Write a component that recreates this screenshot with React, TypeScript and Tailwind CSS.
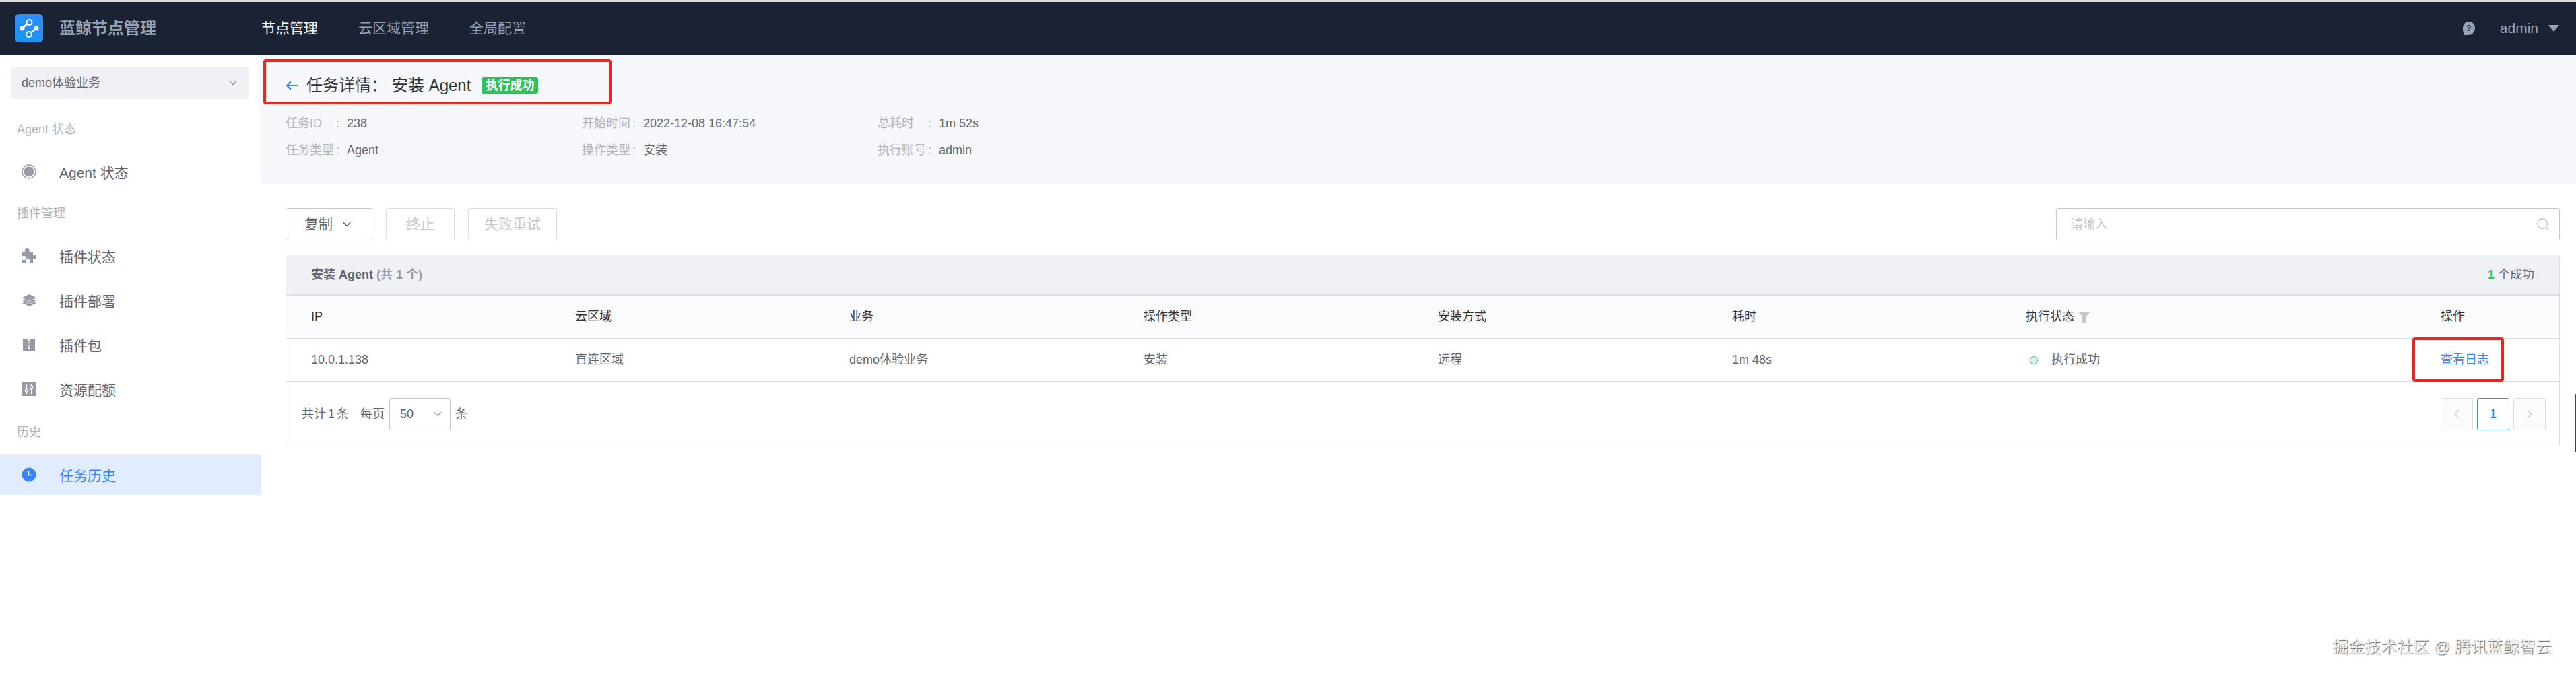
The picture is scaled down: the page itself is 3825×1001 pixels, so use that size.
import { ChevronDown, ChevronLeft, ChevronRight, Search } from 'lucide-react';

const font = { fontFamily: '"Liberation Sans", "Noto Sans CJK SC", sans-serif' };

const Logo = () => (
  <svg viewBox="0 0 42 42" className="w-[42px] h-[42px]">
    <defs>
      <linearGradient id="lg" x1="0" y1="0" x2="0" y2="1">
        <stop offset="0" stopColor="#2f8dfb" />
        <stop offset="1" stopColor="#1a94ee" />
      </linearGradient>
    </defs>
    <rect width="42" height="42" rx="6" fill="url(#lg)" />
    <path d="M11 21L21 12M32 21L21 30" stroke="#fff" strokeWidth="2.4" />
    <path d="M11 21h0M32 21h0" stroke="#fff" strokeWidth="7" strokeLinecap="round" />
    <circle cx="21.500" cy="12" r="4" fill="#2f8dfb" stroke="#fff" strokeWidth="2" />
    <circle cx="21" cy="30" r="4" fill="#1a94ee" stroke="#fff" strokeWidth="2" />
  </svg>
);

const AgentIcon = () => (
  <svg viewBox="0 0 22 22" className="w-[22px] h-[22px]">
    <circle cx="11" cy="11" r="10" fill="none" stroke="#979ba5" strokeWidth="1.4" />
    <circle cx="11" cy="11" r="7.600" fill="#979ba5" />
  </svg>
);

const PuzzleIcon = () => (
  <svg viewBox="0 0 22 22" className="w-[22px] h-[22px]">
    <path
      d="M1 6H6C5 5 4.700 4 4.700 3.200A3.500 3.200 0 0 1 11.700 3.200C11.700 4 11.400 5 10.400 6H17V10.500C18 9.500 18.500 9.300 19 9.300A2.800 3.300 0 0 1 19 15.900C18.500 15.900 18 15.700 17 14.700V21H11.800C12.800 20 13 19.500 13 18.800A3.500 3 0 0 0 6 18.800C6 19.500 6.200 20 7.200 21H1V16C2 17 2.500 17.200 3.200 17.200A3 3.200 0 0 0 3.200 10.800C2.500 10.800 2 11 1 12Z"
      fill="#979ba5"
    />
  </svg>
);

const LayersIcon = () => (
  <svg viewBox="0 0 21 18" className="w-[21px] h-[18px]">
    <path d="M10.500 0L21 5 10.500 10 0 5z" fill="#979ba5" />
    <path d="M3.500 7.300L0 9 10.500 14 21 9 17.500 7.300 10.500 10.800z" fill="#979ba5" />
    <path d="M3.500 11.300L0 13 10.500 18 21 13 17.500 11.300 10.500 14.800z" fill="#979ba5" />
  </svg>
);

const ZipIcon = () => (
  <svg viewBox="0 0 18 18" className="w-[18px] h-[18px]">
    <path d="M0 0h18v18H0z" fill="#979ba5" />
    <path d="M8 1h2v2H8zM8 5h2v2H8zM8 9h2v2H8zM7 12h4v4H7z" fill="#fff" />
  </svg>
);

const SlidersIcon = () => (
  <svg viewBox="0 0 20 20" className="w-[20px] h-[20px]">
    <path d="M0 0h20v20H0z" fill="#979ba5" />
    <path d="M6.500 3v14M13.500 3v14" stroke="#fff" strokeWidth="1.300" />
    <circle cx="6.500" cy="12" r="2" fill="#979ba5" stroke="#fff" strokeWidth="1.300" />
    <circle cx="13.500" cy="7" r="2" fill="#979ba5" stroke="#fff" strokeWidth="1.300" />
  </svg>
);

const ClockIcon = () => (
  <svg viewBox="0 0 22 22" className="w-[22px] h-[22px]">
    <circle cx="11" cy="11" r="10.500" fill="#3a84ff" />
    <path d="M10.500 5V11.500H16" fill="none" stroke="#fff" strokeWidth="1.500" />
  </svg>
);

const HelpIcon = () => (
  <svg viewBox="0 0 18 20" className="w-[18px] h-[20px]">
    <path d="M9 0c5 0 9 4 9 9.500S14 20 8 20H1.500L1 17.500C0 15 0 12 0 9.500 0 4 4 0 9 0z" fill="#96a2b9" />
    <text x="9" y="14" textAnchor="middle" fontSize="12" fontWeight="700" fill="#1a2233" style={font}>?</text>
  </svg>
);

const SectionLabel = ({ children, className }: { children: React.ReactNode; className: string }) => (
  <div className={`pl-[25px] text-[18px] leading-[24px] text-[#b1b4bb] ${className}`}>{children}</div>
);

const NavItem = ({ icon, label, active }: { icon: React.ReactNode; label: string; active?: boolean }) => (
  <div className={`flex h-[60px] items-center text-[21px] ${active ? 'bg-[#e1ecff] text-[#3a84ff]' : 'text-[#63656e]'}`}>
    <span className="flex w-[88px] justify-center pr-[2px]">{icon}</span>
    <span className="pt-[3px]">{label}</span>
  </div>
);

const InfoItem = ({ label, value }: { label: string; value: string }) => (
  <div className="flex text-[18px] leading-[24px]">
    <span className="w-[75px] text-[#b1b4bb]">{label}</span>
    <span className="w-[16px] text-[#b1b4bb]">:</span>
    <span className="text-[#63656e]">{value}</span>
  </div>
);

const gridCols = 'grid grid-cols-[392px_407px_437px_437px_437px_436px_616px_213px] items-center pl-[37px]';

const Sidebar = () => (
  <aside className="w-[388px] shrink-0 border-r border-[#e6e7ea] bg-white">
    <div className="mx-[16px] mt-[18px] flex h-[48px] w-[353px] items-center justify-between rounded-[3px] bg-[#f0f1f5] pl-[16px] pr-[12px] text-[18px] text-[#63656e]">
      demo体验业务
      <ChevronDown className="h-[22px] w-[22px] text-[#979ba5]" strokeWidth={1.6} />
    </div>
    <SectionLabel className="mt-[33px]">Agent 状态</SectionLabel>
    <div className="mt-[21px]">
      <NavItem icon={<AgentIcon />} label="Agent 状态" />
    </div>
    <SectionLabel className="mt-[20px]">插件管理</SectionLabel>
    <div className="mt-[21px] flex flex-col gap-[6px]">
      <NavItem icon={<PuzzleIcon />} label="插件状态" />
      <NavItem icon={<LayersIcon />} label="插件部署" />
      <NavItem icon={<ZipIcon />} label="插件包" />
      <NavItem icon={<SlidersIcon />} label="资源配额" />
    </div>
    <SectionLabel className="mt-[22px]">历史</SectionLabel>
    <div className="mt-[21px]">
      <NavItem icon={<ClockIcon />} label="任务历史" active />
    </div>
  </aside>
);

const App = () => (
  <div className="relative flex h-[1001px] w-[3825px] flex-col overflow-hidden bg-white" style={font}>
    <div className="h-[3px] bg-[#d8dcdd]" />
    <header className="flex h-[78px] items-center justify-between bg-[#1a2233] pl-[22px] pr-[25px]">
      <div className="flex items-center">
        <Logo />
        <span className="ml-[24px] w-[300px] text-[24px] font-bold text-[#96a2b9]">蓝鲸节点管理</span>
        <nav className="flex gap-[60px] text-[21px] text-[#96a2b9]">
          <span className="text-white">节点管理</span>
          <span>云区域管理</span>
          <span>全局配置</span>
        </nav>
      </div>
      <div className="flex items-center text-[21px] text-[#96a2b9]">
        <HelpIcon />
        <span className="ml-[37px]">admin</span>
        <span className="ml-[15px] h-0 w-0 border-x-[8px] border-t-[10px] border-x-transparent border-t-[#96a2b9]" />
      </div>
    </header>

    <div className="flex flex-1">
      <Sidebar />
      <main className="min-w-0 flex-1">
        <section className="h-[192px] bg-[#f5f7fb] pl-[36px]">
          <div className="flex items-center pt-[31px] text-[#313238]">
            <svg viewBox="0 0 18 14" className="h-[14px] w-[18px]">
              <path d="M18 7H2M8 1L2 7l6 6" fill="none" stroke="#3a84ff" strokeWidth="2.200" />
            </svg>
            <span className="ml-[13px] text-[24px] leading-[30px]">任务详情：</span>
            <span className="ml-[7px] text-[24px] leading-[30px]">安装 Agent</span>
            <span className="ml-[16px] flex h-[24px] w-[84px] items-center justify-center rounded-[3px] bg-[#2dc25a] text-[18px] font-bold text-white">执行成功</span>
          </div>
          <div className="mt-[29px] grid grid-cols-[440px_439px_1fr] gap-y-[16px]">
            <InfoItem label="任务ID" value="238" />
            <InfoItem label="开始时间" value="2022-12-08 16:47:54" />
            <InfoItem label="总耗时" value="1m 52s" />
            <InfoItem label="任务类型" value="Agent" />
            <InfoItem label="操作类型" value="安装" />
            <InfoItem label="执行账号" value="admin" />
          </div>
        </section>

        <section className="pl-[36px] pr-[24px] pt-[36px]">
          <div className="flex items-center justify-between">
            <div className="flex gap-[20px] text-[21px]">
              <button className="flex h-[48px] w-[129px] items-center justify-center gap-[11px] rounded-[3px] border border-[#c4c6cc] bg-white text-[#63656e]">
                复制
                <ChevronDown className="h-[20px] w-[20px]" strokeWidth={2} />
              </button>
              <button className="h-[48px] w-[102px] rounded-[3px] border border-[#dcdee5] bg-white text-[#c4c6cc]">终止</button>
              <button className="h-[48px] w-[132px] rounded-[3px] border border-[#dcdee5] bg-white text-[#c4c6cc]">失败重试</button>
            </div>
            <div className="flex h-[48px] w-[748px] items-center justify-between rounded-[3px] border border-[#c4c6cc] bg-white pl-[21px] pr-[13px] text-[18px] text-[#c4c6cc]">
              请输入
              <Search className="h-[22px] w-[22px] text-[#c4c6cc]" strokeWidth={1.6} />
            </div>
          </div>

          <div className="mt-[21px] h-[285px] rounded-[3px] border border-[#dcdee5]">
            <div className="flex h-[60px] items-center justify-between border-b-2 border-[#dcdee5] bg-[#f0f1f5] pl-[37px] pr-[37px] text-[18px]">
              <span className="font-bold text-[#63656e]">
                安装 Agent <span className="text-[#979ba5]">(共 1 个)</span>
              </span>
              <span className="text-[#63656e]">
                <span className="font-bold text-[#2dcb56]">1</span> 个成功
              </span>
            </div>
            <div className={`${gridCols} h-[64px] border-b border-[#dcdee5] bg-[#fafbfd] text-[18px] text-[#313238]`}>
              <span>IP</span>
              <span>云区域</span>
              <span>业务</span>
              <span>操作类型</span>
              <span>安装方式</span>
              <span>耗时</span>
              <span className="flex items-center gap-[6px]">
                执行状态
                <svg viewBox="0 0 18 16" className="h-[16px] w-[18px]">
                  <path d="M0 0h18l-6 7v9H6V7z" fill="#c4c6cc" />
                </svg>
              </span>
              <span>操作</span>
            </div>
            <div className={`${gridCols} h-[64px] border-b border-[#dcdee5] text-[18px] text-[#63656e]`}>
              <span>10.0.1.138</span>
              <span>直连区域</span>
              <span>demo体验业务</span>
              <span>安装</span>
              <span>远程</span>
              <span>1m 48s</span>
              <span className="flex items-center gap-[20px] pl-[6px]">
                <span className="h-[12px] w-[12px] rounded-full border border-[#3fc06d] bg-[#d9f5e3]" />
                执行成功
              </span>
              <span className="text-[#3a84ff]">查看日志</span>
            </div>
            <div className="flex h-[94px] items-center justify-between pl-[23px] pr-[20px] pt-[2px] text-[18px] text-[#63656e]">
              <div className="flex items-center">
                共计<span className="mx-[3px]">1</span>条
                <span className="ml-[17px]">每页</span>
                <span className="mx-[7px] flex h-[48px] w-[91px] items-center justify-between rounded-[3px] border border-[#c4c6cc] pl-[15px] pr-[8px]">
                  50
                  <ChevronDown className="h-[20px] w-[20px] text-[#979ba5]" strokeWidth={1.6} />
                </span>
                条
              </div>
              <div className="flex gap-[6px]">
                <span className="flex h-[48px] w-[48px] items-center justify-center rounded-[3px] border border-[#dcdee5] bg-[#fafbfd] text-[#c4c6cc]">
                  <ChevronLeft className="h-[22px] w-[22px]" strokeWidth={1.5} />
                </span>
                <span className="flex h-[48px] w-[48px] items-center justify-center rounded-[3px] border border-[#3a84ff] text-[#3a84ff]">1</span>
                <span className="flex h-[48px] w-[48px] items-center justify-center rounded-[3px] border border-[#dcdee5] bg-[#fafbfd] text-[#c4c6cc]">
                  <ChevronRight className="h-[22px] w-[22px]" strokeWidth={1.5} />
                </span>
              </div>
            </div>
          </div>
        </section>
      </main>
    </div>

    {/* red annotation boxes drawn over the screenshot */}
    <div className="absolute left-[391px] top-[88px] h-[67px] w-[517px] rounded-[4px] border-[4px] border-[#f5211b]" />
    <div className="absolute left-[3582px] top-[501px] h-[66px] w-[136px] rounded-[4px] border-[4px] border-[#f5211b]" />
    <div className="absolute left-[3823px] top-[585px] h-[87px] w-[2px] rounded-l-[2px] bg-[#444]" />
    <div className="absolute left-[3463px] top-[946px] text-[24px] leading-[30px] text-[#ececec] [text-shadow:1px_1px_1px_#666]">掘金技术社区 @ 腾讯蓝鲸智云</div>
  </div>
);

export default App;
